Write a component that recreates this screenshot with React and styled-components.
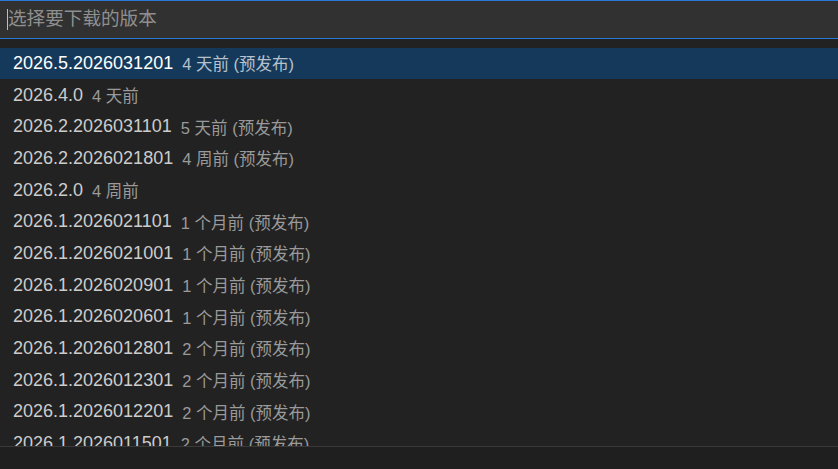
import React from "react";
import styled, { createGlobalStyle } from "styled-components";

const Global = createGlobalStyle`
  html, body { margin: 0; padding: 0; background: #222222; }
  body { font-family: "Liberation Sans", "Noto Sans CJK SC", sans-serif; }
  * { box-sizing: border-box; }
`;

const Widget = styled.div`
  width: 838px;
  height: 469px;
  display: flex;
  flex-direction: column;
  background: #222222;
  overflow: hidden;
`;

const InputBox = styled.div`
  position: relative;
  height: 39px;
  flex: none;
  background: #313131;
  border-top: 1px solid #2b79d6;
  border-bottom: 1px solid #2b79d6;
  display: flex;
  align-items: center;
`;

const Input = styled.input`
  flex: 1;
  height: 100%;
  border: none;
  outline: none;
  background: transparent;
  padding: 0 0 2px 8px;
  font-family: "Liberation Sans", "Noto Sans CJK SC", sans-serif;
  font-size: 18.6px;
  color: #cccccc;
  &::placeholder { color: #8f8f8f; }
`;

const Caret = styled.span`
  position: absolute;
  left: 7px;
  top: 8px;
  width: 1px;
  height: 21px;
  background: #bdbdbd;
`;

const List = styled.div`
  flex: none;
  height: 407px;
  padding-top: 8.67px;
  overflow: hidden;
`;

const Row = styled.div`
  height: 31.67px;
  display: flex;
  align-items: center;
  padding-left: 13px;
  white-space: nowrap;
  background: ${(p) => (p.$selected ? "#15395b" : "transparent")};
  font-size: 18px;
`;

const Label = styled.span`
  color: ${(p) => (p.$selected ? "#ffffff" : "#cccccc")};
`;

const Desc = styled.span`
  margin-left: 9px;
  font-size: 16.5px;
  color: ${(p) => (p.$selected ? "#b6c1cc" : "#9a9a9a")};
`;

const Footer = styled.div`
  flex: 1;
  background: #1f1f1f;
  border-top: 1px solid #3a3a3a;
`;

const items = [
  ["2026.5.2026031201", "4 天前 (预发布)"],
  ["2026.4.0", "4 天前"],
  ["2026.2.2026031101", "5 天前 (预发布)"],
  ["2026.2.2026021801", "4 周前 (预发布)"],
  ["2026.2.0", "4 周前"],
  ["2026.1.2026021101", "1 个月前 (预发布)"],
  ["2026.1.2026021001", "1 个月前 (预发布)"],
  ["2026.1.2026020901", "1 个月前 (预发布)"],
  ["2026.1.2026020601", "1 个月前 (预发布)"],
  ["2026.1.2026012801", "2 个月前 (预发布)"],
  ["2026.1.2026012301", "2 个月前 (预发布)"],
  ["2026.1.2026012201", "2 个月前 (预发布)"],
  ["2026.1.2026011501", "2 个月前 (预发布)"],
  ["2026.1.2026011401", "2 个月前 (预发布)"],
];

export default function App() {
  return (
    <>
      <Global />
      <Widget>
        <InputBox>
          <Input placeholder="选择要下载的版本" readOnly />
          <Caret />
        </InputBox>
        <List>
          {items.map(([v, d], i) => (
            <Row key={v} $selected={i === 0}>
              <Label $selected={i === 0}>{v}</Label>
              <Desc $selected={i === 0}>{d}</Desc>
            </Row>
          ))}
        </List>
        <Footer />
      </Widget>
    </>
  );
}
